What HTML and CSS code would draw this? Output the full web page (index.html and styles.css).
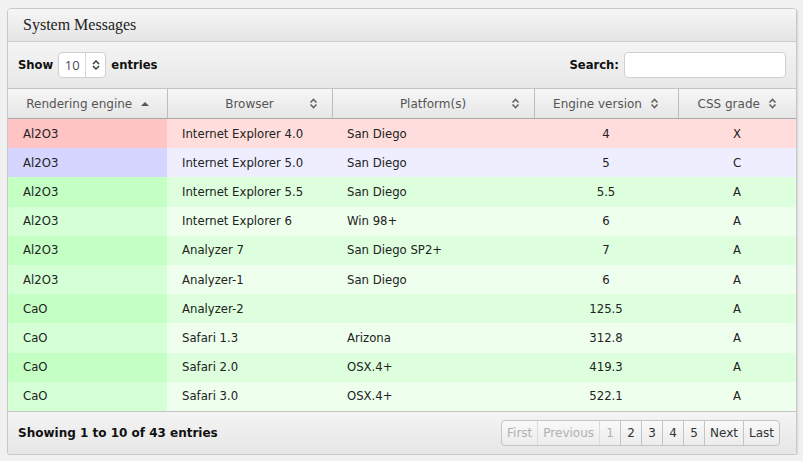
FILE: index.html
```html
<!DOCTYPE html>
<html>
<head>
<meta charset="utf-8">
<link rel="stylesheet" href="styles.css">
</head>
<body>
<div class="box">
  <div class="box-title">System Messages</div>
  <div class="toolbar">
    <div class="length">
      <span class="lbl">Show</span>
      <span class="select"><span class="sel-val">10</span><span class="sel-arrow"><svg width="8" height="10" viewBox="0 0 8 10"><path d="M1 4 L4 1 L7 4 M1 6 L4 9 L7 6" fill="none" stroke="#333" stroke-width="1.4"/></svg></span></span>
      <span class="lbl">entries</span>
    </div>
    <div class="search">
      <span class="lbl">Search:</span>
      <span class="input"></span>
    </div>
  </div>
  <table class="grid">
    <colgroup>
      <col class="c1"><col class="c2"><col class="c3"><col class="c4"><col class="c5">
    </colgroup>
    <thead>
      <tr>
        <th><span class="th-in">Rendering engine <svg class="ic" width="10" height="10" viewBox="0 0 10 10"><path d="M1 7 L5 3 L9 7 Z" fill="#555"/></svg></span></th>
        <th><span class="th-in">Browser</span><svg class="ic r" width="9" height="11" viewBox="0 0 9 11"><path d="M1.5 4.5 L4.5 1.5 L7.5 4.5 M1.5 6.5 L4.5 9.5 L7.5 6.5" fill="none" stroke="#666" stroke-width="1.6"/></svg></th>
        <th><span class="th-in">Platform(s)</span><svg class="ic r" width="9" height="11" viewBox="0 0 9 11"><path d="M1.5 4.5 L4.5 1.5 L7.5 4.5 M1.5 6.5 L4.5 9.5 L7.5 6.5" fill="none" stroke="#666" stroke-width="1.6"/></svg></th>
        <th><span class="th-in">Engine version <svg class="ic" width="9" height="11" viewBox="0 0 9 11"><path d="M1.5 4.5 L4.5 1.5 L7.5 4.5 M1.5 6.5 L4.5 9.5 L7.5 6.5" fill="none" stroke="#666" stroke-width="1.6"/></svg></span></th>
        <th><span class="th-in">CSS grade <svg class="ic" width="9" height="11" viewBox="0 0 9 11"><path d="M1.5 4.5 L4.5 1.5 L7.5 4.5 M1.5 6.5 L4.5 9.5 L7.5 6.5" fill="none" stroke="#666" stroke-width="1.6"/></svg></span></th>
      </tr>
    </thead>
    <tbody>
      <tr class="odd gradeX"><td class="s">Al2O3</td><td>Internet Explorer 4.0</td><td>San Diego</td><td class="ctr">4</td><td class="ctr">X</td></tr>
      <tr class="even gradeC"><td class="s">Al2O3</td><td>Internet Explorer 5.0</td><td>San Diego</td><td class="ctr">5</td><td class="ctr">C</td></tr>
      <tr class="odd gradeA"><td class="s">Al2O3</td><td>Internet Explorer 5.5</td><td>San Diego</td><td class="ctr">5.5</td><td class="ctr">A</td></tr>
      <tr class="even gradeA"><td class="s">Al2O3</td><td>Internet Explorer 6</td><td>Win 98+</td><td class="ctr">6</td><td class="ctr">A</td></tr>
      <tr class="odd gradeA"><td class="s">Al2O3</td><td>Analyzer 7</td><td>San Diego SP2+</td><td class="ctr">7</td><td class="ctr">A</td></tr>
      <tr class="even gradeA"><td class="s">Al2O3</td><td>Analyzer-1</td><td>San Diego</td><td class="ctr">6</td><td class="ctr">A</td></tr>
      <tr class="odd gradeA"><td class="s">CaO</td><td>Analyzer-2</td><td></td><td class="ctr">125.5</td><td class="ctr">A</td></tr>
      <tr class="even gradeA"><td class="s">CaO</td><td>Safari 1.3</td><td>Arizona</td><td class="ctr">312.8</td><td class="ctr">A</td></tr>
      <tr class="odd gradeA"><td class="s">CaO</td><td>Safari 2.0</td><td>OSX.4+</td><td class="ctr">419.3</td><td class="ctr">A</td></tr>
      <tr class="even gradeA"><td class="s">CaO</td><td>Safari 3.0</td><td>OSX.4+</td><td class="ctr">522.1</td><td class="ctr">A</td></tr>
    </tbody>
  </table>
  <div class="footer">
    <div class="info">Showing 1 to 10 of 43 entries</div>
    <div class="pager">
      <span class="pg dis">First</span><span class="pg dis">Previous</span><span class="pg num dis">1</span><span class="pg num">2</span><span class="pg num">3</span><span class="pg num">4</span><span class="pg num">5</span><span class="pg">Next</span><span class="pg">Last</span>
    </div>
  </div>
</div>
</body>
</html>
```

FILE: styles.css
```css
html, body {
  margin: 0;
  padding: 0;
  background: #f1f1f1;
}
body {
  padding: 8px 0 0 7px;
  font-family: "DejaVu Sans", sans-serif;
  font-size: 12px;
  color: #222;
}
.box {
  width: 788px;
  border: 1px solid #c8c8c8;
  border-radius: 4px 4px 3px 3px;
  background: #fff;
  box-shadow: 1px 1px 2px rgba(0,0,0,0.12);
  overflow: hidden;
}
.box-title {
  height: 32px;
  line-height: 32px;
  padding-left: 15px;
  font-family: "Liberation Serif", serif;
  font-size: 16px;
  color: #222;
  background: linear-gradient(#f6f6f6, #e5e5e5);
  border-bottom: 1px solid #cdcdcd;
}
.toolbar {
  height: 46px;
  display: flex;
  align-items: center;
  justify-content: space-between;
  padding: 0 10px 0 10px;
  background: linear-gradient(#f4f4f4, #e8e8e8);
  border-bottom: 1px solid #c4c4c4;
}
.length, .search {
  display: flex;
  align-items: center;
  gap: 5px;
}
.lbl {
  font-weight: bold;
  font-size: 11.6px;
  color: #111;
}
.select {
  display: flex;
  width: 46px;
  height: 24px;
  border: 1px solid #cfcfcf;
  border-radius: 4px;
  background: #fff;
  box-sizing: content-box;
}
.sel-val {
  width: 26px;
  text-align: center;
  line-height: 24px;
  font-family: "Open Sans", sans-serif;
  font-size: 13px;
  color: #4a4a5a;
}
.sel-arrow {
  flex: 1;
  border-left: 1px solid #d6d6d6;
  display: flex;
  align-items: center;
  justify-content: center;
}
.input {
  display: block;
  width: 160px;
  height: 24px;
  border: 1px solid #cfcfcf;
  border-radius: 4px;
  background: #fff;
}
.grid {
  width: 788px;
  border-collapse: collapse;
  table-layout: fixed;
}
.c1 { width: 159px; }
.c2 { width: 165px; }
.c3 { width: 202px; }
.c4 { width: 144px; }
.c5 { width: 118px; }
.grid th {
  height: 29px;
  padding: 0;
  font-weight: normal;
  font-size: 12px;
  color: #555;
  background: linear-gradient(#f6f6f6, #e6e6e6);
  border-left: 1px solid #bdbdbd;
  border-bottom: 1px solid #a9a9a9;
  position: relative;
  text-align: center;
}
.grid th:first-child { border-left: none; }
.th-in {
  display: inline-flex;
  align-items: center;
  gap: 8px;
}
.grid th:first-child .th-in { margin-left: 2px; }
.ic.r {
  position: absolute;
  right: 14px;
  top: 9px;
}
.grid td {
  height: 29.2px;
  padding: 0 0 0 15px;
  font-size: 11.7px;
  color: #222;
}
.grid td.ctr {
  text-align: center;
  padding: 0;
}
tr.odd.gradeX td { background: #ffdddd; }
tr.odd.gradeX td.s { background: #ffc4c4; }
tr.even.gradeC td { background: #eeeeff; }
tr.even.gradeC td.s { background: #d5d5ff; }
tr.odd.gradeA td { background: #ddffdd; }
tr.odd.gradeA td.s { background: #c4ffc4; }
tr.even.gradeA td { background: #eeffee; }
tr.even.gradeA td.s { background: #d5ffd5; }
.footer {
  height: 42px;
  display: flex;
  align-items: center;
  justify-content: space-between;
  padding: 0 16px 0 10px;
  background: linear-gradient(#f4f4f4, #e6e6e6);
  border-top: 1px solid #c4c4c4;
}
.info {
  font-weight: bold;
  font-size: 12px;
  color: #111;
}
.pager {
  display: flex;
  border: 1px solid #c4c4c4;
  border-radius: 4px;
  background: linear-gradient(#f9f9f9, #ececec);
  overflow: hidden;
}
.pg {
  height: 24px;
  line-height: 24px;
  padding: 0 5px;
  font-family: "DejaVu Sans", sans-serif;
  font-size: 12px;
  color: #333;
  border-left: 1px solid #c4c4c4;
}
.pg.num {
  width: 20px;
  padding: 0;
  text-align: center;
}
.pg:first-child { border-left: none; }
.pg.dis {
  color: #b0b0b0;
  border-left-color: #dcdcdc;
}
```
